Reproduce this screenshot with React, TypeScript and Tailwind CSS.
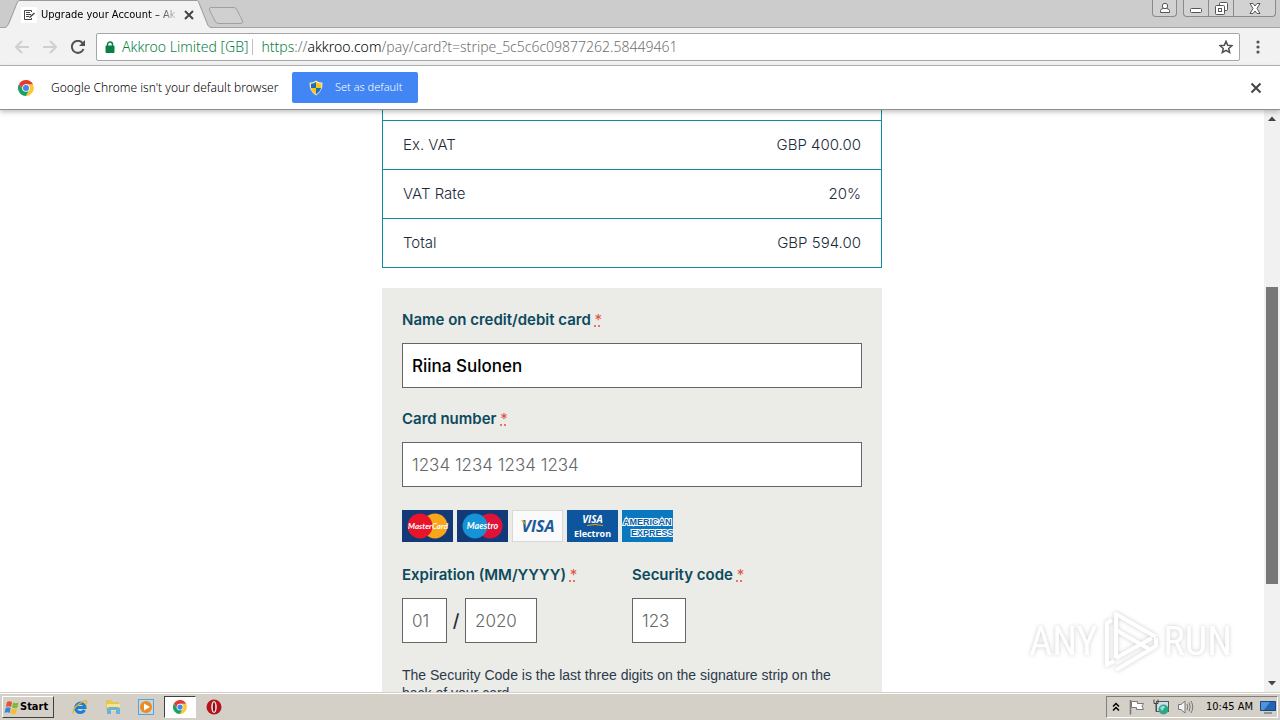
import { useState } from "react";
import type { ReactNode } from "react";

const UI_FONT = "font-['Noto_Sans',sans-serif]";
const PAGE_FONT = "font-['Inter',sans-serif]";

const summaryRows = [
  { label: "Ex. VAT", value: "GBP 400.00" },
  { label: "VAT Rate", value: "20%" },
  { label: "Total", value: "GBP 594.00" },
];

function ChromeLogo({ className }: { className: string }) {
  return (
    <svg viewBox="0 0 48 48" className={className} aria-hidden="true">
      <path d="M24 13 H44.800 A24 24 0 0 1 24 48 L33.500 29.500 Z" fill="#fcc934" />
      <path d="M14.500 29.500 L3.200 12 A24 24 0 0 0 24 48 L33.500 29.500 Z" fill="#1aa260" />
      <path d="M24 13 H45.300 A24 24 0 0 0 3.200 12 L14.500 29.500 Z" fill="#e33b2e" />
      <circle cx="24" cy="24" r="11.500" fill="#fff" />
      <circle cx="24" cy="24" r="9" fill="#4285f4" />
    </svg>
  );
}

function TabStrip() {
  return (
    <div className="flex h-7 shrink-0 items-start bg-[#cccccc] pl-[5px] shadow-[inset_0_-1px_0_#a3a3a3]">
      <div className="flex h-7">
        <svg viewBox="0 0 15 28" className="h-7 w-[15px]" aria-hidden="true">
          <path d="M0 28 C2 27 3 25 4 23 L12 3 C13 1 13.500 0.500 15 0.500 V28 Z" fill="#f2f2f2" />
          <path d="M0 27.500 C2 27 3 25 4 23 L12 3 C13 1 13.500 0.500 15 0.500" fill="none" stroke="#999" />
        </svg>
        <div className="flex w-44 items-center border-t border-[#999] bg-[#f2f2f2]">
          <svg viewBox="0 0 16 16" className="ml-px size-4 shrink-0 bg-white" fill="none" stroke="#444" aria-hidden="true">
            <path d="M10.500 5 V3.500 H3.500 V12.500 H10.500 V11" />
            <path d="M5 5.500 H9 M5 7.500 H10 M5 9.500 H8" />
            <path d="M8.500 10.500 L13.500 6" strokeWidth="1.500" />
          </svg>
          <span className="ml-1 w-[135px] overflow-hidden whitespace-nowrap pt-px font-['DejaVu_Sans_Condensed','DejaVu_Sans',sans-serif] text-[11px] [mask-image:linear-gradient(to_right,black_115px,transparent_138px)]">
            Upgrade your Account – Akkroo
          </span>
          <button type="button" aria-label="Close tab" className="ml-2 text-[#444]">
            <svg viewBox="0 0 10 10" className="size-[10px]" stroke="currentColor" strokeWidth="2" aria-hidden="true">
              <path d="M1 1 L9 9 M9 1 L1 9" />
            </svg>
          </button>
        </div>
        <svg viewBox="0 0 16 28" className="h-7 w-4" aria-hidden="true">
          <path d="M0 0.500 C2 0.500 2.500 1 3 3 L11 23 C12 26 13 27 16 28 H0 Z" fill="#f2f2f2" />
          <path d="M0 0.500 C2 0.500 2.500 1 3 3 L11 23 C12 26 13 27.500 16 27.500" fill="none" stroke="#999" />
        </svg>
      </div>
      <button type="button" aria-label="New tab" className="-ml-1 mt-[6px]">
        <svg viewBox="0 0 36 19" className="h-[19px] w-9" aria-hidden="true">
          <path d="M3 1.500 H26 Q28 1.500 29 4 L34.500 15 Q35 17.500 33 17.500 H11 Q8 17.500 7 15 L1.500 4 Q1 1.500 3 1.500 Z" fill="#d0d0d0" stroke="#a0a0a0" />
        </svg>
      </button>
      <div className="ml-auto flex gap-[6px] pr-1">
        <button type="button" aria-label="Profile" className="flex h-[17px] w-[25px] items-center justify-center rounded-b border border-t-0 border-[#8a8a8a] bg-[#d2d2d2]">
          <svg viewBox="0 0 12 12" className="size-3" fill="#fff" stroke="#555" aria-hidden="true">
            <path d="M1.500 10.500 V8.500 Q2 6.500 4.500 6.500 H7.500 Q10 6.500 10.500 8.500 V10.500 Z" />
            <circle cx="6" cy="4" r="2.700" />
          </svg>
        </button>
        <div className="flex h-[17px] overflow-hidden rounded-b border border-t-0 border-[#8a8a8a] bg-[#d2d2d2]">
          <button type="button" aria-label="Minimize" className="flex w-[25px] items-center justify-center border-r border-[#8a8a8a]">
            <svg viewBox="0 0 12 12" className="size-3" aria-hidden="true">
              <rect x="0.500" y="6.500" width="11" height="4" rx="1" fill="#fff" stroke="#555" />
            </svg>
          </button>
          <button type="button" aria-label="Restore" className="flex w-[25px] items-center justify-center border-r border-[#8a8a8a]">
            <svg viewBox="0 0 13 13" className="size-[13px]" fill="#fff" stroke="#555" aria-hidden="true">
              <rect x="4.500" y="0.500" width="8" height="8" rx="1" />
              <rect x="0.500" y="3.500" width="9" height="9" rx="1" />
              <rect x="3.500" y="6.500" width="3" height="3" />
            </svg>
          </button>
          <button type="button" aria-label="Close window" className="flex w-[41px] items-center justify-center">
            <svg viewBox="0 0 12 11" className="h-[11px] w-3" fill="#fff" stroke="#555" aria-hidden="true">
              <path d="M1 0.500 H4 L6 3 L8 0.500 H11 L8 5.500 L11 10.500 H8 L6 8 L4 10.500 H1 L4 5.500 Z" />
            </svg>
          </button>
        </div>
      </div>
    </div>
  );
}

function Toolbar() {
  return (
    <div className="flex h-[38px] shrink-0 items-center border-b border-[#b5b5b5] bg-[#f2f2f2]">
      <div className="flex w-24 items-center gap-[14px] pl-[15px]">
        <button type="button" aria-label="Back" disabled className="text-[#cfcfcf]">
          <svg viewBox="0 0 14 14" className="size-[14px]" fill="none" stroke="currentColor" strokeWidth="2" aria-hidden="true">
            <path d="M14 7 H1 M7 1 L1 7 L7 13" />
          </svg>
        </button>
        <button type="button" aria-label="Forward" disabled className="text-[#cfcfcf]">
          <svg viewBox="0 0 14 14" className="size-[14px]" fill="none" stroke="currentColor" strokeWidth="2" aria-hidden="true">
            <path d="M0 7 H13 M7 1 L13 7 L7 13" />
          </svg>
        </button>
        <button type="button" aria-label="Reload" className="text-[#505050]">
          <svg viewBox="0 0 14 14" className="size-[14px]" fill="none" stroke="currentColor" strokeWidth="2" aria-hidden="true">
            <path d="M12.500 9 A6 6 0 1 1 11.500 3" />
            <path d="M14 0 V6 H8 Z" fill="currentColor" stroke="none" />
          </svg>
        </button>
      </div>
      <div className={`flex h-7 min-w-0 flex-1 items-center whitespace-nowrap rounded-[2px] border border-[#a6a6a6] bg-white pl-2 pr-[6px] ${UI_FONT} text-sm font-light`}>
        <svg viewBox="0 0 10 12" className="h-3 w-[10px] shrink-0" aria-hidden="true">
          <rect x="0.500" y="4.500" width="9" height="7.500" rx="1" fill="#0b8043" />
          <path d="M2.500 5 V3.500 A2.500 2.500 0 0 1 7.500 3.500 V5" fill="none" stroke="#0b8043" strokeWidth="1.500" />
        </svg>
        <span className="ml-[7px] text-[#0b8043]">Akkroo Limited [GB]</span>
        <span className="ml-1 h-4 w-px bg-[#c0c0c0]" />
        <span className="ml-2 flex-1 text-[#707070]">
          <span className="text-[#0b8043]">https</span>://<span className="text-black">akkroo.com</span>/pay/card?t=stripe_5c5c6c09877262.58449461
        </span>
        <button type="button" aria-label="Bookmark this page">
          <svg viewBox="0 0 16 16" className="size-[14px]" fill="none" stroke="#505050" strokeWidth="1.700" aria-hidden="true">
            <path d="M8 1.500 L9.900 6 L14.800 6.400 L11.100 9.600 L12.200 14.300 L8 11.800 L3.800 14.300 L4.900 9.600 L1.200 6.400 L6.100 6 Z" />
          </svg>
        </button>
      </div>
      <button type="button" aria-label="Menu" className="flex w-10 justify-center pr-1">
        <svg viewBox="0 0 4 14" className="h-[14px] w-1" fill="#555" aria-hidden="true">
          <circle cx="2" cy="2" r="1.600" />
          <circle cx="2" cy="7" r="1.600" />
          <circle cx="2" cy="12" r="1.600" />
        </svg>
      </button>
    </div>
  );
}

function DefaultBrowserBar() {
  return (
    <div className={`z-10 flex h-11 shrink-0 items-center border-b border-[#8f8f8f] bg-white px-[18px] shadow-[0_2px_5px_rgba(0,0,0,0.25)] ${UI_FONT}`}>
      <ChromeLogo className="size-4" />
      <span className="ml-[17px] w-[229px] whitespace-nowrap text-xs font-light">Google Chrome isn't your default browser</span>
      <button type="button" className="ml-3 flex h-[31px] items-center rounded-[2px] bg-[#4285f4] px-4 text-[11px] font-light text-white">
        <svg viewBox="0 0 16 16" className="mr-[11px] size-4" aria-hidden="true">
          <path d="M8 0.500 Q5 3 1.500 2.500 Q1 11 8 15.500 Q15 11 14.500 2.500 Q11 3 8 0.500 Z" fill="#f5e6a8" />
          <path d="M8 2 Q5.500 4 3 3.800 V8 H8 Z" fill="#1e6fb8" />
          <path d="M8 2 Q10.500 4 13 3.800 V8 H8 Z" fill="#f7c325" />
          <path d="M3 8 Q4 12 8 14.200 V8 Z" fill="#f7c325" />
          <path d="M13 8 Q12 12 8 14.200 V8 Z" fill="#1e6fb8" />
        </svg>
        Set as default
      </button>
      <button type="button" aria-label="Dismiss" className="ml-auto">
        <svg viewBox="0 0 12 12" className="size-3" stroke="#444" strokeWidth="2" aria-hidden="true">
          <path d="M1.500 1.500 L10.500 10.500 M10.500 1.500 L1.500 10.500" />
        </svg>
      </button>
    </div>
  );
}

function FieldLabel({ htmlFor, children }: { htmlFor: string; children: ReactNode }) {
  return (
    <label htmlFor={htmlFor} className="block h-[35px] whitespace-nowrap text-[15px] leading-6 font-semibold text-[#0b4a5c]">
      {children}{" "}
      <abbr title="required" className="font-normal text-[#e0523f] underline decoration-dotted">*</abbr>
    </label>
  );
}

const inputClass =
  "block h-[45px] border border-[#666] bg-white px-[9px] text-[17px] text-black placeholder:text-[#666] placeholder:font-light outline-none";

function CardLogos() {
  return (
    <div className="flex gap-1">
      <svg viewBox="0 0 51 32" className="h-8 w-[51px]" role="img" aria-label="MasterCard">
        <rect width="51" height="32" fill="#123a78" />
        <circle cx="33" cy="16" r="12.500" fill="#f9a61a" />
        <circle cx="18" cy="16" r="12.500" fill="#e8142a" />
        <text x="26" y="19" textAnchor="middle" fill="#fff" fontSize="8" fontWeight="700" fontStyle="italic" fontFamily="Lato, sans-serif">MasterCard</text>
      </svg>
      <svg viewBox="0 0 51 32" className="h-8 w-[51px]" role="img" aria-label="Maestro">
        <rect width="51" height="32" fill="#123a78" />
        <circle cx="33" cy="16" r="12.500" fill="#e0123a" />
        <circle cx="18" cy="16" r="12.500" fill="#1593d6" />
        <text x="25.500" y="19" textAnchor="middle" fill="#fff" fontSize="9" fontWeight="700" fontStyle="italic" fontFamily="Lato, sans-serif">Maestro</text>
      </svg>
      <svg viewBox="0 0 51 32" className="h-8 w-[51px]" role="img" aria-label="Visa">
        <rect x="0.500" y="0.500" width="50" height="31" fill="#fafafa" stroke="#d8d8d8" />
        <text x="26" y="22" textAnchor="middle" fill="#1a5a9c" fontSize="16" fontWeight="700" fontStyle="italic" fontFamily="Open Sans, sans-serif">VISA</text>
        <path d="M8.500 10.500 H12 L14 16 Q12 12.500 8.500 10.500 Z" fill="#f0a020" />
      </svg>
      <svg viewBox="0 0 51 32" className="h-8 w-[51px]" role="img" aria-label="Visa Electron">
        <rect width="51" height="32" fill="#0d559c" />
        <text x="25.500" y="13" textAnchor="middle" fill="#fff" fontSize="10" fontWeight="700" fontStyle="italic" fontFamily="Open Sans, sans-serif">VISA</text>
        <path d="M20 15.500 Q28 13.500 36 15.500" fill="none" stroke="#f0a020" />
        <text x="25.500" y="27" textAnchor="middle" fill="#fff" fontSize="9" fontWeight="700" fontFamily="Open Sans, sans-serif">Electron</text>
      </svg>
      <svg viewBox="0 0 51 32" className="h-8 w-[51px]" role="img" aria-label="American Express">
        <rect width="51" height="32" fill="#0a78be" />
        <g fill="#0a5ea8" stroke="#fff" strokeWidth="2" paintOrder="stroke" fontSize="9" fontWeight="700" fontFamily="Liberation Sans, sans-serif">
          <text x="1" y="15">AMERICAN</text>
          <text x="9" y="26">EXPRESS</text>
        </g>
      </svg>
    </div>
  );
}

function PaymentPage() {
  const [name, setName] = useState("Riina Sulonen");

  return (
    <main className={`min-w-0 flex-1 overflow-hidden bg-white ${PAGE_FONT}`}>
      <div className="mx-auto w-full max-w-[500px]">
        <table className="w-full border-separate border-spacing-0 border-x border-b border-[#0d8ca3] text-[15px] font-light text-[#1c2b39]">
          <tbody>
            <tr className="h-[10px]">
              <td colSpan={2} />
            </tr>
            {summaryRows.map((row) => (
              <tr key={row.label} className="h-[49px]">
                <td className="border-t border-[#0d8ca3] px-5">{row.label}</td>
                <td className="border-t border-[#0d8ca3] px-5 text-right">{row.value}</td>
              </tr>
            ))}
          </tbody>
        </table>

        <form className="mt-5 bg-[#ebebe8] p-5">
          <FieldLabel htmlFor="card-name">Name on credit/debit card</FieldLabel>
          <input id="card-name" value={name} onChange={(e) => setName(e.target.value)} className={`${inputClass} w-full font-medium`} />

          <div className="mt-[19px]">
            <FieldLabel htmlFor="card-number">Card number</FieldLabel>
            <input id="card-number" placeholder="1234 1234 1234 1234" className={`${inputClass} w-full`} />
          </div>

          <div className="mt-[23px]">
            <CardLogos />
          </div>

          <div className="mt-[21px] grid grid-cols-2">
            <div>
              <FieldLabel htmlFor="exp-month">Expiration (MM/YYYY)</FieldLabel>
              <div className="flex items-center">
                <input id="exp-month" aria-label="Expiration month" placeholder="01" className={`${inputClass} w-[45px]`} />
                <span className="w-[18px] text-center text-lg font-medium text-[#1c2b39]">/</span>
                <input id="exp-year" aria-label="Expiration year" placeholder="2020" className={`${inputClass} w-[72px]`} />
              </div>
            </div>
            <div>
              <FieldLabel htmlFor="cvc">Security code</FieldLabel>
              <input id="cvc" placeholder="123" className={`${inputClass} w-[54px]`} />
            </div>
          </div>

          <p className="mt-[23px] font-['Liberation_Sans',sans-serif] text-sm leading-[18px] text-[#2c3a48]">
            The Security Code is the last three digits on the signature strip on the back of your card.
          </p>
        </form>
      </div>
    </main>
  );
}

function ScrollBar() {
  return (
    <div className="flex w-4 shrink-0 flex-col items-center bg-[#f1f1f1] py-[6px]" aria-hidden="true">
      <svg viewBox="0 0 8 5" className="h-[5px] w-2" fill="#444"><path d="M0 5 L4 0.500 L8 5 Z" /></svg>
      <div className="grow-[166]" />
      <div className="w-3 grow-[297] bg-[#787878]" />
      <div className="grow-[97]" />
      <svg viewBox="0 0 8 5" className="h-[5px] w-2" fill="#444"><path d="M0 0 L4 4.500 L8 0 Z" /></svg>
    </div>
  );
}

function Watermark() {
  return (
    <div className="pointer-events-none absolute right-12 bottom-[18px] flex items-center gap-1 font-['Roboto_Condensed','Open_Sans_Condensed','Noto_Sans_ExtraCondensed','Liberation_Sans',sans-serif] text-[40px] leading-none text-white drop-shadow-[0_0_2px_rgba(0,0,0,0.2)]">
      <span>ANY</span>
      <svg viewBox="0 0 58 64" className="h-16 w-[58px]" fill="none" stroke="#fff" strokeWidth="4" strokeLinejoin="round" aria-hidden="true">
        <path d="M10 10 L5 13 V55 L12 51" />
        <path d="M14 48 V4 L54 27" />
        <path d="M14 20 L47 39" />
        <path d="M14 48 L50 28 M14 60 L54 36 V28" />
      </svg>
      <span>RUN</span>
    </div>
  );
}

function Taskbar() {
  return (
    <div className="flex h-7 shrink-0 items-center border-t border-[#d4d0c8] bg-[#d4d0c8] font-['DejaVu_Sans_Condensed','DejaVu_Sans',sans-serif] text-[11px] shadow-[inset_0_1px_0_#fff]">
      <button type="button" className="ml-[2px] flex h-[22px] w-[52px] items-center border border-t-white border-l-white border-r-[#404040] border-b-[#404040] pl-px font-bold">
        <svg viewBox="0 0 16 16" className="size-4 shrink-0" aria-hidden="true">
          <path d="M3 3 Q5.500 1.500 8 3 L7 8 Q4.500 6.500 2 8 Z" fill="#e8502a" />
          <path d="M9 3.500 Q11.500 5 14.500 3.500 L13.500 8.500 Q10.500 10 8 8.500 Z" fill="#7db93c" />
          <path d="M1.700 9 Q4 7.500 6.700 9 L5.700 14 Q3 12.500 0.500 14 Z" fill="#3a86d8" />
          <path d="M7.700 9.500 Q10 11 13.200 9.500 L12 14.500 Q9 16 6.700 14.500 Z" fill="#f5c02c" />
        </svg>
        <span className="pt-[2px]">Start</span>
      </button>
      <nav className="ml-[10px] flex items-center" aria-label="Quick launch">
        <button type="button" aria-label="Internet Explorer" className="flex w-8 justify-center">
          <svg viewBox="0 0 16 16" className="size-4" fill="none" aria-hidden="true">
            <path d="M12.500 11 A4.700 4.700 0 1 1 13 8.500 H4" stroke="#1d7fd0" strokeWidth="3" />
            <path d="M1.500 14.500 Q0 10 7 5 Q14 0 14.800 2.500 Q15 4 13.500 6" stroke="#e8b52a" strokeWidth="1.300" />
          </svg>
        </button>
        <button type="button" aria-label="File Explorer" className="flex w-[33px] justify-center">
          <svg viewBox="0 0 16 16" className="size-4" aria-hidden="true">
            <path d="M1 1 H6 L7 3 H14 V12 H1 Z" fill="#e8c654" />
            <path d="M2 5 H15 V12 H2 Z" fill="#f8e48c" />
            <path d="M2 15 V10 Q2 8 5 8 H12 Q15 8 15 10 V15 H11 V11 H6 V15 Z" fill="#6ab2dc" />
          </svg>
        </button>
        <button type="button" aria-label="Media Player" className="flex w-[34px] justify-center">
          <svg viewBox="0 0 16 16" className="size-4" aria-hidden="true">
            <rect x="0.500" y="0.500" width="15" height="15" fill="#bcd9ee" stroke="#6b9cc4" />
            <circle cx="8" cy="8" r="6" fill="#f18a1c" />
            <path d="M6 4.500 L12 8 L6 11.500 Z" fill="#fff" />
          </svg>
        </button>
        <button type="button" aria-label="Google Chrome" className="ml-px flex h-[22px] w-8 items-center justify-center border border-t-[#404040] border-l-[#404040] border-r-white border-b-white bg-white">
          <ChromeLogo className="size-[14px]" />
        </button>
        <button type="button" aria-label="Opera" className="ml-px flex w-[34px] justify-center">
          <svg viewBox="0 0 16 16" className="size-4" aria-hidden="true">
            <circle cx="8" cy="8" r="7.500" fill="#b3141c" />
            <ellipse cx="8" cy="8" rx="2.800" ry="6" fill="#f2dede" />
            <ellipse cx="8" cy="8" rx="1.200" ry="4.700" fill="#8a0f18" />
          </svg>
        </button>
      </nav>
      <div className="ml-auto mr-[2px] flex h-[22px] items-center border border-t-[#808080] border-l-[#808080] border-r-white border-b-white pr-px pl-[5px]">
        <svg viewBox="0 0 8 10" className="h-[10px] w-2" fill="none" stroke="#000" strokeWidth="1.500" aria-hidden="true">
          <path d="M1 4.500 L4 1.500 L7 4.500 M1 8.500 L4 5.500 L7 8.500" />
        </svg>
        <svg viewBox="0 0 16 16" className="ml-[9px] size-4" fill="#fff" stroke="#777" aria-hidden="true">
          <path d="M1.500 1 V15.500" strokeWidth="1.500" />
          <path d="M2.500 2.500 H8.500 V4.500 H14.500 L13 7 L14.500 10.500 H7.500 V8.500 H2.500 Z" />
        </svg>
        <svg viewBox="0 0 16 16" className="ml-2 size-4" aria-hidden="true">
          <rect x="3.500" y="2.500" width="12" height="10" fill="#cfe0ea" stroke="#555" />
          <path d="M1 0.500 V4.500 H5 V0.500 M3 4.500 V12.500" fill="none" stroke="#444" />
          <circle cx="10.500" cy="10.500" r="5" fill="#2fa58c" />
          <path d="M7 9 Q10 5 12 8 L9 12 Z" fill="#9be0cf" />
        </svg>
        <svg viewBox="0 0 17 16" className="ml-2 h-4 w-[17px]" fill="none" stroke="#777" aria-hidden="true">
          <path d="M1.500 5.500 H4 L8 2 V14 L4 10.500 H1.500 Z" fill="#f4f4f4" />
          <path d="M10 5 Q11.500 8 10 11 M12 3.500 Q14.500 8 12 12.500 M14 2 Q17.500 8 14 14" />
        </svg>
        <time className="ml-3 w-[46px] whitespace-nowrap pt-[2px]">10:45 AM</time>
        <svg viewBox="0 0 16 14" className="ml-2 h-[14px] w-4" aria-hidden="true">
          <path d="M0.500 1.500 H15.500 V10.500 H0.500 Z" fill="#2464b4" stroke="#174684" />
          <path d="M1 2 H10 L4 10 H1 Z" fill="#4f93d8" />
          <path d="M4 13 H12" stroke="#555" />
        </svg>
      </div>
    </div>
  );
}

export default function App() {
  return (
    <div className="flex h-screen flex-col overflow-hidden bg-white text-black">
      <TabStrip />
      <Toolbar />
      <DefaultBrowserBar />
      <div className="relative flex min-h-0 flex-1">
        <PaymentPage />
        <ScrollBar />
        <Watermark />
      </div>
      <Taskbar />
    </div>
  );
}
